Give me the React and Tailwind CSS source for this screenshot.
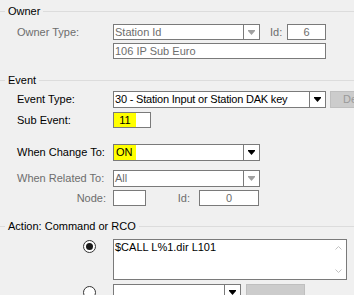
import React from 'react';

const font = { fontFamily: '"Liberation Sans", Arial, sans-serif' };

function GroupHeader({ title, className = '' }) {
  return (
    <div className={`flex items-center h-[13px] ${className}`}>
      <div className="w-[5px] h-px bg-[#dcdcdc]" />
      <span className="px-[3px] text-black leading-none">{title}</span>
      <div className="flex-1 h-px bg-[#dcdcdc]" />
    </div>
  );
}

function Arrow({ disabled }) {
  return (
    <svg width="7" height="5" viewBox="0 0 7 5">
      <path d="M0 0H7V1L3.5 5L0 1Z" fill={disabled ? '#a0a0a0' : '#000'} />
    </svg>
  );
}

function Combo({ value, width, disabled, highlight, tight, height = 'h-[17px]' }) {
  return (
    <div className={`flex shrink-0 bg-white border border-[#7a7a7a] ${height} ${width}`}>
      <div className="flex-1 flex items-center overflow-hidden">
        {highlight ? (
          <span className="bg-[#ffff00] w-[22px] h-full flex items-center pl-[2px] text-black">{value}</span>
        ) : (
          <span className={`pl-[1px] whitespace-nowrap ${tight ? 'tracking-[-0.2px]' : ''} ${disabled ? 'text-[#6d6d6d]' : 'text-black'}`}>{value}</span>
        )}
      </div>
      <div className="w-[16px] shrink-0 border-l border-[#7a7a7a] flex items-center justify-center">
        <Arrow disabled={disabled} />
      </div>
    </div>
  );
}

function Label({ children, disabled }) {
  return (
    <div className={`w-[113px] shrink-0 pl-[17px] whitespace-nowrap ${disabled ? 'text-[#6d6d6d]' : 'text-black'}`}>
      {children}
    </div>
  );
}

function Radio({ checked }) {
  return (
    <div className="w-[13px] h-[13px] rounded-full border border-[#333] bg-white flex items-center justify-center">
      {checked && <div className="w-[7px] h-[7px] rounded-full bg-[#1a1a1a]" />}
    </div>
  );
}

export default function App() {
  return (
    <div className="w-[354px] h-[295px] bg-[#f0f0f0] overflow-hidden text-[11px] flex flex-col" style={font}>
      <GroupHeader title="Owner" className="mt-[6px]" />

      <div className="flex items-center mt-[7px] h-[16px]">
        <Label disabled>Owner Type:</Label>
        <Combo value="Station Id" width="w-[147px]" height="h-[16px]" disabled />
        <div className="w-[27px] shrink-0 pl-[10px] text-[#6d6d6d]">Id:</div>
        <div className="w-[39px] h-[16px] shrink-0 bg-white border border-[#7a7a7a] flex items-center justify-center text-[#6d6d6d]">6</div>
      </div>

      <div className="flex items-center mt-[3px] h-[16px]">
        <div className="w-[113px] shrink-0" />
        <div className="w-[213px] h-[16px] shrink-0 bg-white border border-[#7a7a7a] flex items-center pl-[1px] text-[#6d6d6d]">106 IP Sub Euro</div>
      </div>

      <div className="mt-[10px] h-px bg-[#dcdcdc]" />

      <GroupHeader title="Event" className="mt-[6px]" />

      <div className="flex items-center mt-[5px] h-[17px]">
        <Label>Event Type:</Label>
        <Combo value="30 - Station Input or Station DAK key" width="w-[213px]" tight />
        <div className="ml-[4px] w-[75px] h-[17px] shrink-0 bg-[#cccccc] border border-[#bfbfbf] flex items-center pl-[12px] text-[#9a9a9a]">Details...</div>
      </div>

      <div className="flex items-center mt-[4px] h-[16px]">
        <Label>Sub Event:</Label>
        <div className="w-[38px] h-[16px] shrink-0 bg-white border border-[#7a7a7a] flex items-center">
          <span className="bg-[#ffff00] w-[22px] h-full flex items-center justify-center text-black">11</span>
        </div>
      </div>

      <div className="flex items-center mt-[16px] h-[17px]">
        <Label>When Change To:</Label>
        <Combo value="ON" width="w-[147px]" highlight />
      </div>

      <div className="flex items-center mt-[9px] h-[17px]">
        <Label disabled>When Related To:</Label>
        <Combo value="All" width="w-[147px]" disabled />
      </div>

      <div className="flex items-center mt-[3px] h-[16px]">
        <div className="w-[113px] shrink-0 text-right pr-[7px] text-[#6d6d6d]">Node:</div>
        <div className="w-[33px] h-[16px] shrink-0 bg-white border border-[#7a7a7a]" />
        <div className="w-[53px] shrink-0 text-right pr-[9px] text-[#6d6d6d]">Id:</div>
        <div className="w-[60px] h-[16px] shrink-0 bg-white border border-[#7a7a7a] flex items-center justify-center text-[#6d6d6d]">0</div>
      </div>

      <div className="mt-[11px] h-px bg-[#dcdcdc]" />

      <GroupHeader title="Action: Command or RCO" className="mt-[4px]" />

      <div className="flex mt-[7px] h-[41px]">
        <div className="w-[113px] shrink-0 pl-[83px] pt-[1px]">
          <Radio checked />
        </div>
        <div className="w-[234px] h-[41px] shrink-0 bg-white border border-[#7a7a7a] flex">
          <div className="flex-1 pl-[1px] pt-[1px] text-black leading-[13px]">$CALL L%1.dir L101</div>
          <div className="w-[16px] flex flex-col items-center justify-between py-[6px]">
            <svg width="7" height="4" viewBox="0 0 7 4"><path d="M0.5 3.5L3.5 0.5L6.5 3.5" fill="none" stroke="#c2c2c2" /></svg>
            <svg width="7" height="4" viewBox="0 0 7 4"><path d="M0.5 0.5L3.5 3.5L6.5 0.5" fill="none" stroke="#c2c2c2" /></svg>
          </div>
        </div>
      </div>

      <div className="flex mt-[4px] h-[17px]">
        <div className="w-[113px] shrink-0 pl-[83px] pt-[2px]">
          <Radio />
        </div>
        <Combo value="" width="w-[128px]" />
        <div className="ml-[5px] w-[59px] h-[17px] shrink-0 bg-[#cccccc] border border-[#bfbfbf]" />
      </div>
    </div>
  );
}
